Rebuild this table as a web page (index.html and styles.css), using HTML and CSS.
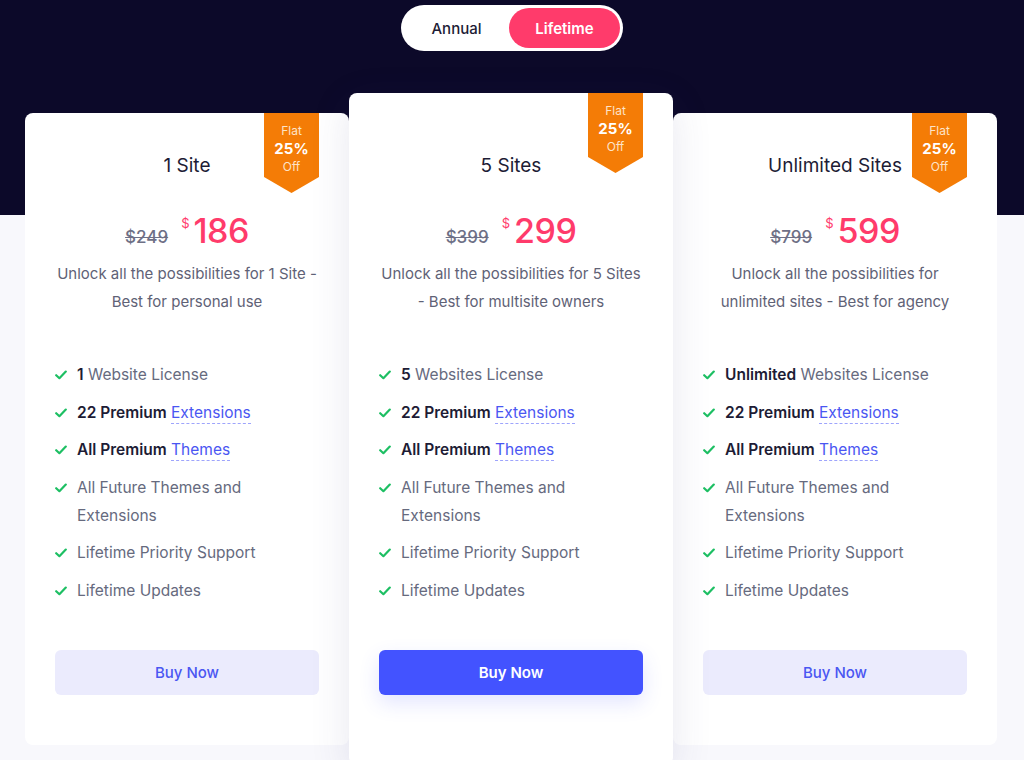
FILE: index.html
```html
<!DOCTYPE html>
<html lang="en">
<head>
<meta charset="utf-8">
<title>Pricing</title>
<link rel="stylesheet" href="styles.css">
</head>
<body>
<div class="page">
  <div class="toggle">
    <span class="toggle-opt">Annual</span>
    <span class="toggle-opt active">Lifetime</span>
  </div>

  <div class="plans">
    <div class="card">
      <div class="badge"><span>Flat</span><b>25%</b><span>Off</span></div>
      <h3 class="title">1 Site</h3>
      <div class="price"><s class="old">$249</s><span class="cur">$</span><span class="amount">186</span></div>
      <p class="desc">Unlock all the possibilities for 1 Site - Best for personal use</p>
      <ul class="features">
        <li><svg class="check" viewBox="0 0 12 10"><path d="M1.2 5.2 4.4 8.2 10.8 1.6"/></svg><span><b>1</b> Website License</span></li>
        <li><svg class="check" viewBox="0 0 12 10"><path d="M1.2 5.2 4.4 8.2 10.8 1.6"/></svg><span><b>22 Premium</b> <a class="link">Extensions</a></span></li>
        <li><svg class="check" viewBox="0 0 12 10"><path d="M1.2 5.2 4.4 8.2 10.8 1.6"/></svg><span><b>All Premium</b> <a class="link">Themes</a></span></li>
        <li><svg class="check" viewBox="0 0 12 10"><path d="M1.2 5.2 4.4 8.2 10.8 1.6"/></svg><span>All Future Themes and Extensions</span></li>
        <li><svg class="check" viewBox="0 0 12 10"><path d="M1.2 5.2 4.4 8.2 10.8 1.6"/></svg><span>Lifetime Priority Support</span></li>
        <li><svg class="check" viewBox="0 0 12 10"><path d="M1.2 5.2 4.4 8.2 10.8 1.6"/></svg><span>Lifetime Updates</span></li>
      </ul>
      <a class="btn">Buy Now</a>
    </div>

    <div class="card featured">
      <div class="badge"><span>Flat</span><b>25%</b><span>Off</span></div>
      <h3 class="title">5 Sites</h3>
      <div class="price"><s class="old">$399</s><span class="cur">$</span><span class="amount">299</span></div>
      <p class="desc">Unlock all the possibilities for 5 Sites - Best for multisite owners</p>
      <ul class="features">
        <li><svg class="check" viewBox="0 0 12 10"><path d="M1.2 5.2 4.4 8.2 10.8 1.6"/></svg><span><b>5</b> Websites License</span></li>
        <li><svg class="check" viewBox="0 0 12 10"><path d="M1.2 5.2 4.4 8.2 10.8 1.6"/></svg><span><b>22 Premium</b> <a class="link">Extensions</a></span></li>
        <li><svg class="check" viewBox="0 0 12 10"><path d="M1.2 5.2 4.4 8.2 10.8 1.6"/></svg><span><b>All Premium</b> <a class="link">Themes</a></span></li>
        <li><svg class="check" viewBox="0 0 12 10"><path d="M1.2 5.2 4.4 8.2 10.8 1.6"/></svg><span>All Future Themes and Extensions</span></li>
        <li><svg class="check" viewBox="0 0 12 10"><path d="M1.2 5.2 4.4 8.2 10.8 1.6"/></svg><span>Lifetime Priority Support</span></li>
        <li><svg class="check" viewBox="0 0 12 10"><path d="M1.2 5.2 4.4 8.2 10.8 1.6"/></svg><span>Lifetime Updates</span></li>
      </ul>
      <a class="btn primary">Buy Now</a>
    </div>

    <div class="card">
      <div class="badge"><span>Flat</span><b>25%</b><span>Off</span></div>
      <h3 class="title">Unlimited Sites</h3>
      <div class="price"><s class="old">$799</s><span class="cur">$</span><span class="amount">599</span></div>
      <p class="desc">Unlock all the possibilities for unlimited sites - Best for agency</p>
      <ul class="features">
        <li><svg class="check" viewBox="0 0 12 10"><path d="M1.2 5.2 4.4 8.2 10.8 1.6"/></svg><span><b>Unlimited</b> Websites License</span></li>
        <li><svg class="check" viewBox="0 0 12 10"><path d="M1.2 5.2 4.4 8.2 10.8 1.6"/></svg><span><b>22 Premium</b> <a class="link">Extensions</a></span></li>
        <li><svg class="check" viewBox="0 0 12 10"><path d="M1.2 5.2 4.4 8.2 10.8 1.6"/></svg><span><b>All Premium</b> <a class="link">Themes</a></span></li>
        <li><svg class="check" viewBox="0 0 12 10"><path d="M1.2 5.2 4.4 8.2 10.8 1.6"/></svg><span>All Future Themes and Extensions</span></li>
        <li><svg class="check" viewBox="0 0 12 10"><path d="M1.2 5.2 4.4 8.2 10.8 1.6"/></svg><span>Lifetime Priority Support</span></li>
        <li><svg class="check" viewBox="0 0 12 10"><path d="M1.2 5.2 4.4 8.2 10.8 1.6"/></svg><span>Lifetime Updates</span></li>
      </ul>
      <a class="btn">Buy Now</a>
    </div>
  </div>
</div>
</body>
</html>
```
FILE: styles.css
```css
* { box-sizing: border-box; }
html, body { margin: 0; padding: 0; }
body {
  font-family: "Inter", "Liberation Sans", sans-serif;
  color: #5f6276;
  background: #f8f8fc;
}
.page {
  height: 760px;
  overflow: hidden;
  padding-top: 5px;
  background: linear-gradient(#0c0929 0, #0c0929 215px, #f8f8fc 215px);
}
.toggle {
  width: 222px;
  height: 46px;
  margin: 0 auto;
  background: #fff;
  border-radius: 23px;
  padding: 3px;
  display: flex;
}
.toggle-opt {
  flex: 1;
  display: flex;
  align-items: center;
  justify-content: center;
  border-radius: 20px;
  font-size: 15px;
  font-weight: 500;
  color: #1d1c35;
}
.toggle-opt.active {
  flex: 0 0 111px;
  background: #ff3b6b;
  color: #fff;
  font-weight: 600;
}
.plans {
  display: grid;
  grid-template-columns: 324px 324px 324px;
  margin: 42px 0 0 25px;
  align-items: start;
}
.card {
  position: relative;
  background: #fff;
  border-radius: 8px;
  margin-top: 20px;
  padding: 40px 30px 50px;
  display: flex;
  flex-direction: column;
  text-align: center;
}
.card.featured {
  margin-top: 0;
  padding-top: 60px;
  padding-bottom: 70px;
  z-index: 1;
  box-shadow: 0 10px 40px rgba(60, 60, 120, 0.12);
}
.badge {
  position: absolute;
  top: 0;
  right: 30px;
  width: 55px;
  height: 80px;
  background: #f47c06;
  clip-path: polygon(0 0, 100% 0, 100% 80%, 50% 100%, 0 80%);
  color: #fff;
  display: flex;
  flex-direction: column;
  align-items: center;
  padding-top: 9px;
  font-size: 12px;
  line-height: 18px;
}
.badge span { color: #fde3c8; }
.badge b {
  font-size: 15px;
  font-weight: 700;
}
.title {
  margin: 0;
  font-size: 19px;
  line-height: 26px;
  font-weight: 400;
  color: #1d1c35;
}
.price {
  margin-top: 32px;
  height: 40px;
  display: flex;
  justify-content: center;
  align-items: baseline;
  color: #ff3b6b;
}
.old {
  font-size: 17px;
  font-weight: 500;
  color: #6e7086;
  margin-right: 13px;
}
.cur {
  font-size: 13px;
  align-self: flex-start;
  margin-top: 4px;
  margin-right: 4px;
}
.amount {
  font-size: 34px;
  font-weight: 500;
  line-height: 40px;
  letter-spacing: -0.5px;
}
.desc {
  margin: 9px 0 0;
  font-size: 15px;
  line-height: 28px;
  color: #5f6276;
}
.features {
  list-style: none;
  margin: 45px 0 0;
  padding: 0;
  text-align: left;
  display: flex;
  flex-direction: column;
  gap: 9.5px;
}
.features li {
  display: flex;
  align-items: flex-start;
  gap: 10px;
  font-size: 15.5px;
  line-height: 28px;
  color: #666a7e;
}
.features li span { max-width: 215px; }
.features b {
  font-weight: 600;
  color: #1d1c35;
}
.check {
  flex: none;
  width: 12px;
  height: 10px;
  margin-top: 9px;
  fill: none;
  stroke: #1dbf63;
  stroke-width: 2.2;
  stroke-linecap: round;
  stroke-linejoin: round;
}
.link {
  color: #4a56f2;
  border-bottom: 1px dashed #9ea4fc;
  line-height: 21px;
  display: inline-block;
}
.btn {
  margin-top: 45px;
  height: 45px;
  border-radius: 6px;
  background: #ebebfd;
  color: #4a56f2;
  font-size: 15px;
  font-weight: 500;
  display: flex;
  align-items: center;
  justify-content: center;
}
.btn.primary {
  background: #4353ff;
  color: #fff;
  font-weight: 600;
  box-shadow: 0 8px 20px rgba(67, 83, 255, 0.15);
}
```
